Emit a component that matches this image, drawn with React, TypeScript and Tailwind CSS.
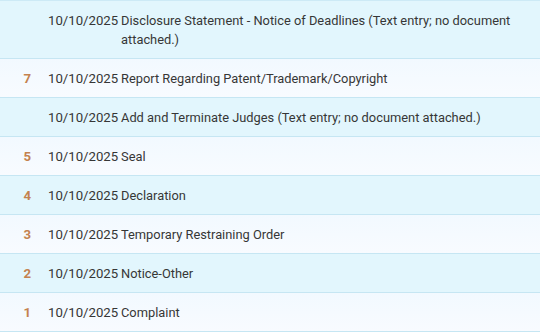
const rows = [
  { n: "", d: "10/10/2025", t: "Disclosure Statement - Notice of Deadlines (Text entry; no document attached.)" },
  { n: "7", d: "10/10/2025", t: "Report Regarding Patent/Trademark/Copyright" },
  { n: "", d: "10/10/2025", t: "Add and Terminate Judges (Text entry; no document attached.)" },
  { n: "5", d: "10/10/2025", t: "Seal" },
  { n: "4", d: "10/10/2025", t: "Declaration" },
  { n: "3", d: "10/10/2025", t: "Temporary Restraining Order" },
  { n: "2", d: "10/10/2025", t: "Notice-Other" },
  { n: "1", d: "10/10/2025", t: "Complaint" },
];

export default function App() {
  return (
    <div className="w-[540px] h-[332px] bg-white overflow-hidden font-['Roboto','Noto_Sans',sans-serif] text-[13.2px] leading-[19px] text-[#363636]">
      <div className="border-t border-[#cdeaf6]">
        {rows.map((r, i) => (
          <div
            key={i}
            className={
              "flex items-start pt-[10px] pb-[9px] border-b border-[#c6e6f3] " +
              (i % 2 === 0 ? "bg-[#e2f6fd]" : "bg-gradient-to-b from-[#f2f9ff] to-[#f8fbff]")
            }
          >
            <div className="w-[31px] shrink-0 text-right font-bold text-[#c4824f]">{r.n}</div>
            <div className="ml-[17px] w-[73px] shrink-0">{r.d}</div>
            <div className="pr-[18px] text-[12.85px]">{r.t}</div>
          </div>
        ))}
      </div>
    </div>
  );
}
